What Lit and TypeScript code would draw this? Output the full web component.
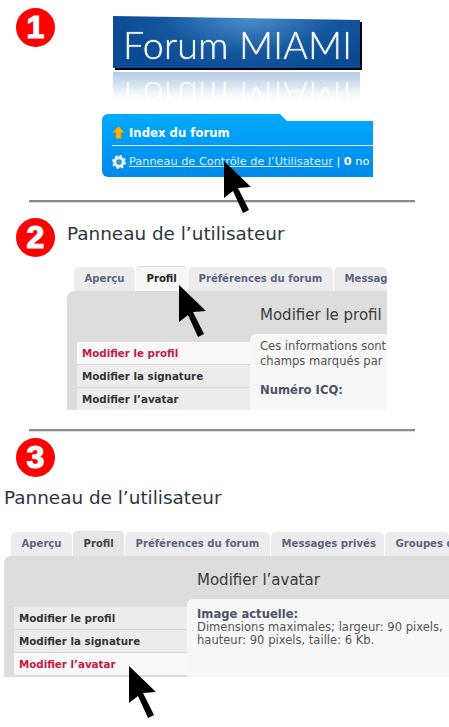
import { LitElement, html, css, svg } from "lit";
import { customElement } from "lit/decorators.js";

const cursor = (cls: string) => html`<svg class="cursor ${cls}" width="28" height="52" viewBox="0 0 28 52"><path d="M0 0 L27 26 L14 27 L25 49 L19 52 L9 30 L0 37 Z" fill="#000"/></svg>`;
const badge = (n: string) => html`<div class="badge">${n}</div>`;
const rule = html`<div class="rule"></div>`;

const tabs = (items: [string, number][]) => html`<div class="tabs">
  ${items.map(([t, w]) => html`<div class="tab ${t === "Profil" ? "on" : ""}" style="width:${w}px">${t}</div>`)}
</div>`;
const side = (active: number) => html`<div class="side">
  ${["Modifier le profil", "Modifier la signature", "Modifier l’avatar"].map(
    (t, i) => html`<div class="item ${i === active ? "act" : ""}">${t}</div>`
  )}
</div>`;

@customElement("app-root")
export class AppRoot extends LitElement {
  static styles = css`
    :host { display: block; width: 449px; height: 727px; position: relative; overflow: hidden; background: #fff; font-family: "DejaVu Sans", Verdana, sans-serif; }
    .rule { height: 2px; margin: 0 34px 0 29px; background: #8a8a8a; box-shadow: 0 1px 1px #ddd; }
    .badge { width: 39px; height: 39px; border-radius: 50%; background: #fe0000; color: #fff; font: bold 32px/38px "Liberation Sans", sans-serif; text-align: center; flex: none; -webkit-text-stroke: 1.2px #fff; }
    .cursor { position: absolute; }
    .c1 { left: 224px; top: 161px; }
    .c2 { left: 179px; top: 285px; }
    .c3 { left: 129px; top: 666px; }

    .s1 { height: 200px; display: flex; padding-left: 16px; box-sizing: border-box; }
    .s1 .badge { margin-top: 8px; }
    .s1col { margin-left: 47px; padding-top: 16px; }
    .logo { margin-left: 11px; width: 247px; height: 52px; position: relative; filter: drop-shadow(2px 2px 0 #000); }
    .logoBg { height: 52px; display: flex; align-items: center; box-sizing: border-box; padding: 5px 0 0 10px; color: #f4f7fb; clip-path: polygon(0 0, 100% 4px, 100% 100%, 0 100%); background: radial-gradient(ellipse 140px 60px at 55% 0, #4d8fcc, #15589f 60%, #0b4a94); font: 300 37.5px/1 Lato, sans-serif; letter-spacing: 0.2px; text-shadow: 0 0 1px #fff; white-space: nowrap; overflow: hidden; }
    .refl { margin: 4px 0 0 11px; width: 247px; height: 34px; overflow: hidden; background: linear-gradient(#b4cce4, #e8f0f8 60%, #fff); -webkit-mask-image: linear-gradient(#000, #000 40%, transparent); mask-image: linear-gradient(#000, #000 40%, transparent); }
    .reflIn { transform: scaleY(-1); color: #fff; font: 300 37.5px/34px Lato, sans-serif; letter-spacing: 0.2px; padding-left: 10px; white-space: nowrap; height: 34px; transform-origin: 50% 50%; margin-top: 7px; }
    .blue { margin-top: 8px; width: 271px; height: 63px; box-sizing: border-box; background: linear-gradient(#00abff, #0089e8); border-radius: 6px 0 0 6px; clip-path: polygon(0 0, 178px 0, 185px 7px, 100% 7px, 100% 100%, 0 100%); padding: 10px 0 0 10px; color: #fff; white-space: nowrap; overflow: hidden; }
    .bl1 { display: flex; align-items: center; gap: 4px; height: 17px; font-weight: bold; font-size: 11.7px; border-bottom: 1px solid #e6f5ff; padding-bottom: 4px; }
    .bl2 { display: flex; align-items: center; gap: 3px; height: 15px; margin-top: 8px; font-size: 11.3px; }
    .bl2 u { color: #dcf1ff; }
    .bl2 b { color: #fff; }

    .s2 { height: 227px; box-sizing: border-box; padding: 16px 0 0 16px; }
    .s2head { display: flex; height: 48px; }
    .title { font-size: 18.4px; line-height: 22px; color: #2c3640; white-space: nowrap; }
    .s2head .title { margin: 5px 0 0 12px; }
    .shot { position: relative; overflow: hidden; }
    .s2 .shot { margin-left: 51px; width: 320px; height: 144px; }
    .s3 { height: 296px; box-sizing: border-box; padding-top: 7px; }
    .s3 .badge { margin-left: 16px; }
    .s3 .title { margin: 10px 0 0 4px; }
    .s3 .shot { margin: 22px 0 0 4px; width: 445px; height: 146px; }

    .tabs { display: flex; gap: 1px; padding-left: 7px; height: 25px; align-items: flex-end; white-space: nowrap; }
    .tab { height: 24px; box-sizing: border-box; background: #ececec; color: #5a6584; font-weight: bold; font-size: 10.1px; line-height: 24px; padding-left: 10.5px; border-radius: 5px 5px 0 0; flex: none; overflow: hidden; }
    .tab.on { height: 25px; background: #f6f6f6; color: #222; padding-top: 1px; box-shadow: inset 0 1px 0 #ddd; }
    .s3 .tab.on { color: #444; background: #e6e6e6; }
    .panel { background: #dcdcdc; border-radius: 7px 0 0 0; display: grid; grid-template-columns: 183px 1fr; grid-template-rows: 43px 1fr; height: 119px; margin-top: 0; }
    .s3 .panel { height: 122px; }
    .head { grid-column: 2; padding: 14px 0 0 10px; font-size: 15px; line-height: 20px; color: #3a3a3a; white-space: nowrap; }
    .side { grid-column: 1; grid-row: 2; padding: 8px 0 0 10px; }
    .item { height: 22px; margin-bottom: 1px; background: #ececec; color: #333; font-weight: bold; font-size: 10.3px; line-height: 22px; padding-left: 5px; white-space: nowrap; box-shadow: 0 1px 0 #d6d6d6; }
    .item.act { background: #f8f8f8; color: #c41845; }
    .box { grid-column: 2; grid-row: 2; background: #f7f7f7; border-radius: 6px 0 0 0; padding: 5px 0 0 10px; font-size: 11.55px; line-height: 15px; color: #555; white-space: nowrap; overflow: hidden; }
    .box b { color: #4a5268; font-size: 11.6px; }
    .gap { margin-top: 14px; }
    .s3 .box { padding-top: 9px; line-height: 13px; }
    svg { display: block; flex: none; }
  `;

  render() {
    return html`
      <div class="s1">
        ${badge("1")}
        <div class="s1col">
          <div class="logo"><div class="logoBg">Forum MIAMI</div></div>
          <div class="refl"><div class="reflIn">Forum MIAMI</div></div>
          <div class="blue">
            <div class="bl1">
              <svg width="13" height="13" viewBox="0 0 13 13"><path d="M6.5 0.5 L12.5 6.5 L9 6.5 L9 12.5 L4 12.5 L4 6.5 L0.5 6.5 Z" fill="#ffb400" stroke="#e08a00" stroke-width=".6"/></svg>
              <span>Index du forum</span>
            </div>
            <div class="bl2">
              <svg width="14" height="14" viewBox="0 0 14 14">${svg`<circle cx="7" cy="7" r="4.2" fill="none" stroke="#eef1f5" stroke-width="3"/><circle cx="7" cy="7" r="6" fill="none" stroke="#eef1f5" stroke-width="2" stroke-dasharray="2.4 2.3"/><circle cx="7" cy="7" r="1.6" fill="#6d8fb0"/>`}</svg>
              <span><u>Panneau de Contrôle de l’Utilisateur</u> | <b>0</b> no</span>
            </div>
          </div>
        </div>
      </div>
      ${rule}
      <div class="s2">
        <div class="s2head">${badge("2")}<div class="title">Panneau de l’utilisateur</div></div>
        <div class="shot">
          ${tabs([["Aperçu", 61], ["Profil", 51], ["Préférences du forum", 145], ["Messages", 53]])}
          <div class="panel">
            <div class="head">Modifier le profil</div>
            ${side(0)}
            <div class="box">Ces informations sont<br />champs marqués par u<br /><div class="gap"><b>Numéro ICQ:</b></div></div>
          </div>
        </div>
      </div>
      ${rule}
      <div class="s3">
        ${badge("3")}
        <div class="title">Panneau de l’utilisateur</div>
        <div class="shot">
          ${tabs([["Aperçu", 61], ["Profil", 51], ["Préférences du forum", 145], ["Messages privés", 113], ["Groupes d", 64]])}
          <div class="panel">
            <div class="head">Modifier l’avatar</div>
            ${side(2)}
            <div class="box"><b>Image actuelle:</b><br />Dimensions maximales; largeur: 90 pixels,<br />hauteur: 90 pixels, taille: 6 Kb.</div>
          </div>
        </div>
      </div>
      ${cursor("c1")}${cursor("c2")}${cursor("c3")}
    `;
  }
}
